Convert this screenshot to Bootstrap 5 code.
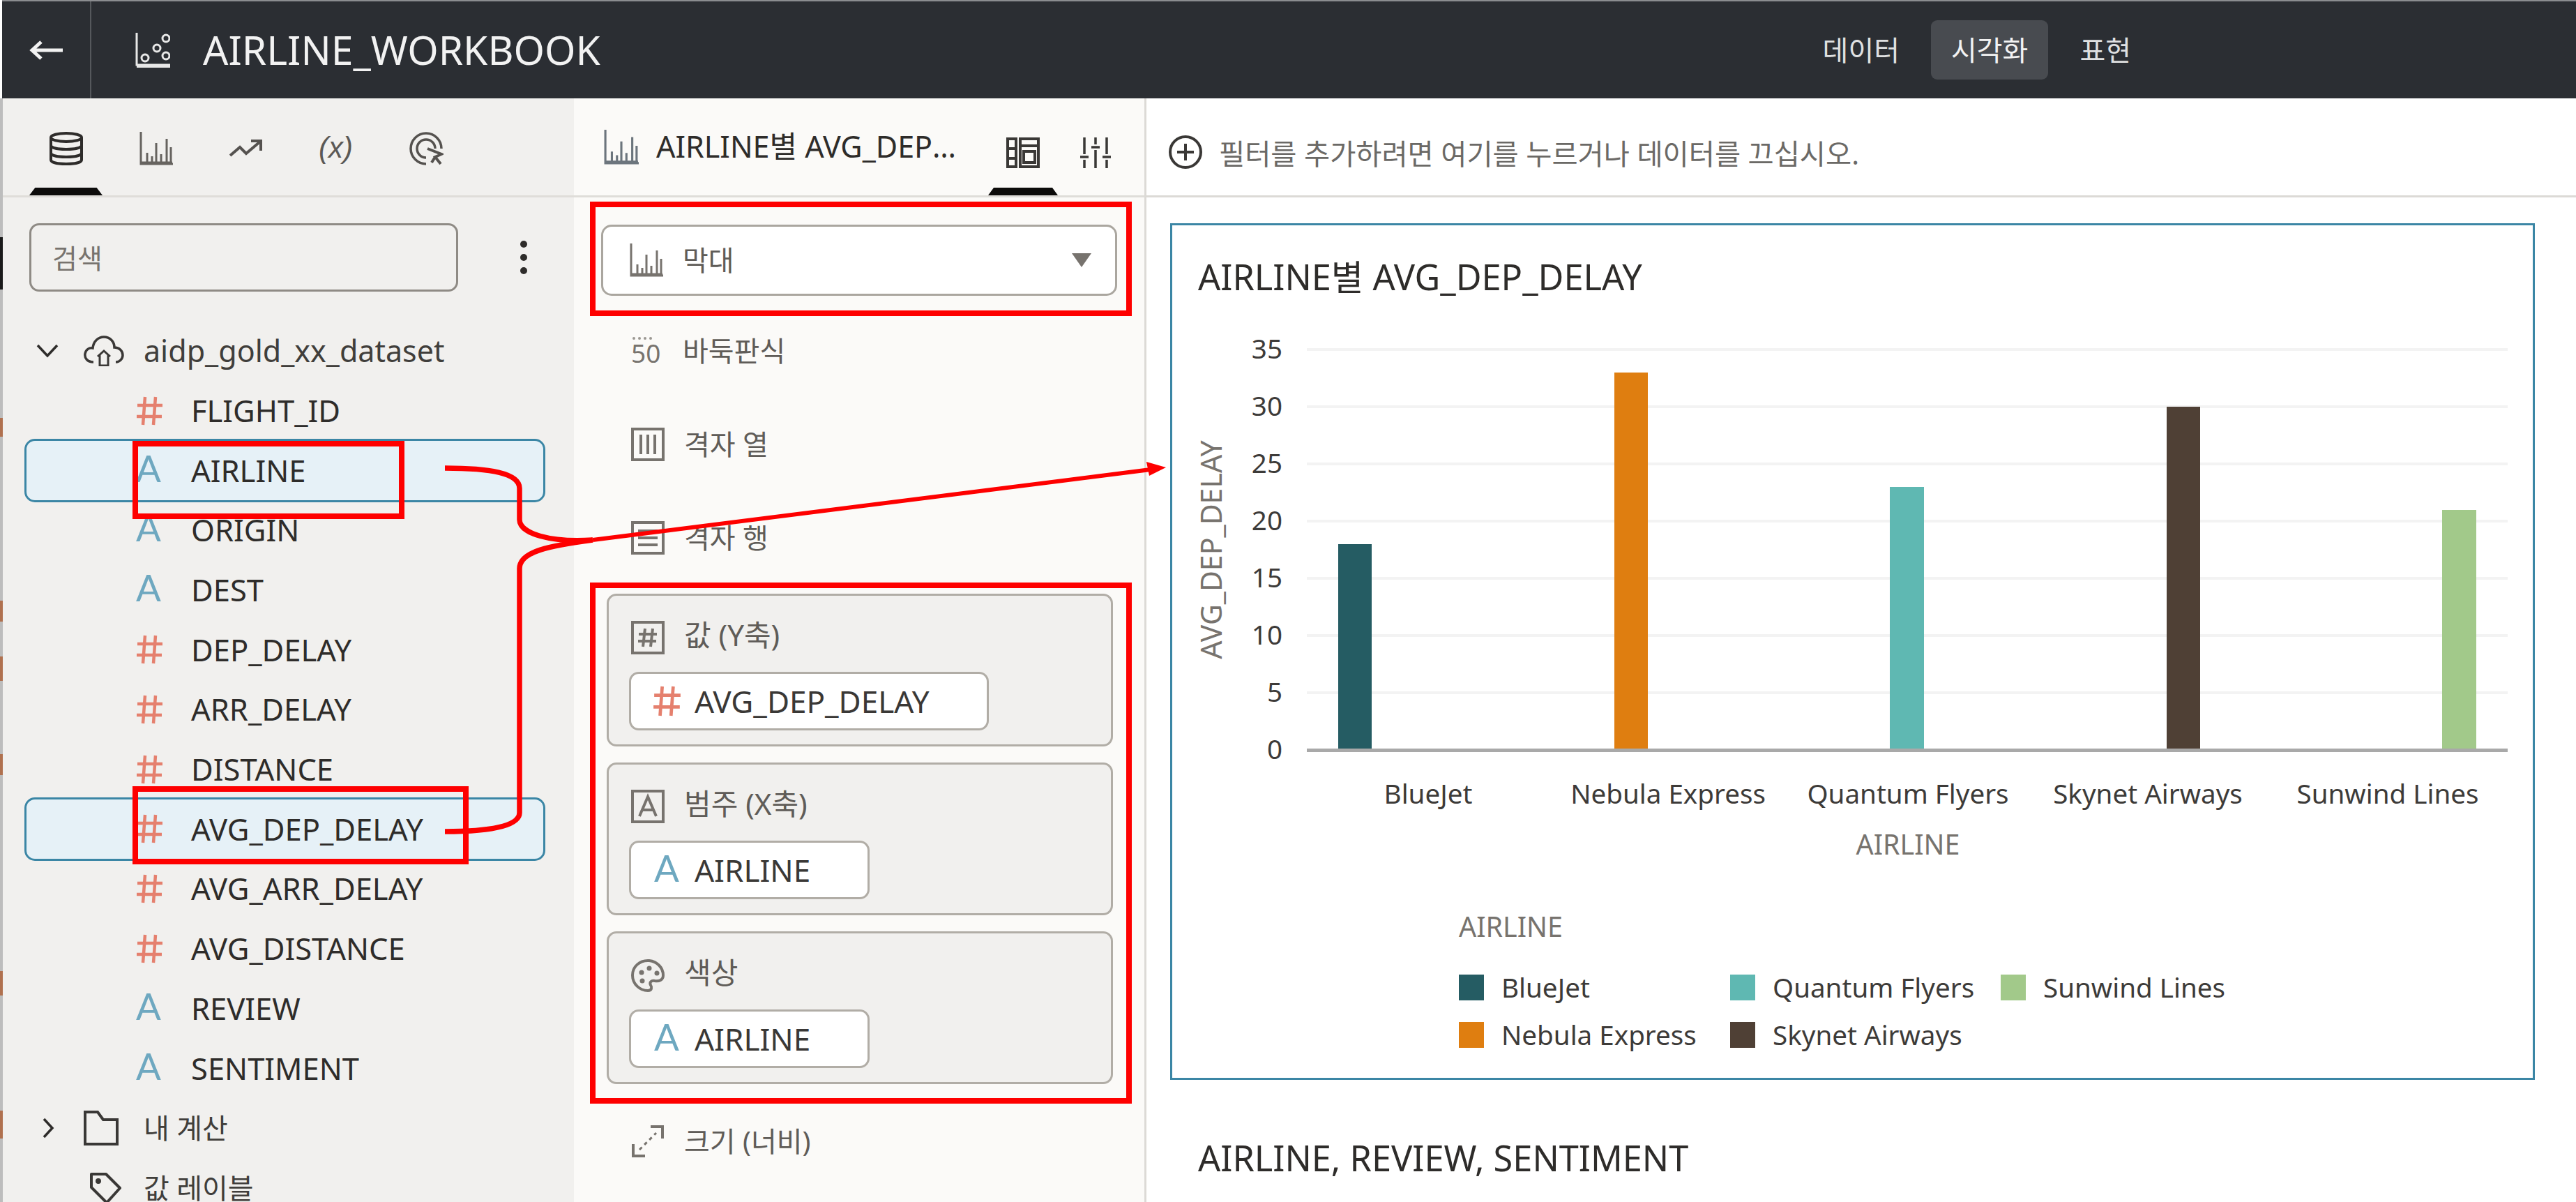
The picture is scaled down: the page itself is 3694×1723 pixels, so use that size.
<!DOCTYPE html>
<html lang="ko">
<head>
  <meta charset="UTF-8" />
  <title>AIRLINE_WORKBOOK</title>
  <link href="https://cdn.jsdelivr.net/npm/bootstrap@5.3.3/dist/css/bootstrap.min.css" rel="stylesheet"/>
  <style>
    body {
      width: 3694px;
      height: 1723px;
      overflow: hidden;
      background: #fff;
      color: #2e2c2a;
      font-family: "Noto Sans", "Noto Sans CJK KR", sans-serif;
      font-size: 43.5px;
    }
    svg { display: block; flex: none; }

    .top-bar { height: 141px; background: #2b2e33; color: #f2f2f2; border-top: 2px solid #8b8d90; margin-left: 3px; }
    .back-btn { width: 128px; height: 100%; border-right: 2px solid #55585c; }
    .wb-icon { margin: 0 47px 0 63px; }
    .wb-title { font-size: 57px; }
    .view-nav { margin-right: 609px; gap: 16px; }
    .view-nav .nav-link { color: #dfe0e1; font-size: 40px; line-height: 85px; padding: 0 29px; border-radius: 9px; }
    .view-nav .nav-link.active { background: #484b50; color: #f2f2f2; }

    .work-area { height: 1582px; }
    .data-side {
      width: 823px; background: #f1f0ee; border-left: 4px solid #bdbdbd;
      border-image: linear-gradient(#bdbdbd 0 200px, #1a1a1a 200px 275px, #bdbdbd 275px 458px, #b0714f 458px 485px, #bdbdbd 485px 720px,
        #b0714f 720px 750px, #bdbdbd 750px 800px, #b0714f 800px 835px, #bdbdbd 835px 940px, #b0714f 940px 970px, #bdbdbd 970px 1250px,
        #b0714f 1250px 1285px, #bdbdbd 1285px 1450px, #b0714f 1450px 1490px, #bdbdbd 1490px) 1;
    }
    .tab-row { height: 142px; border-bottom: 3px solid #dfddd9; padding-left: 38px; gap: 24px; color: #66635f; }
    .tab-row .nav-link { width: 105px; height: 139px; padding: 48px 0 0; color: inherit; position: relative; }
    .tab-row .nav-link svg { margin: 0 auto; }
    .tab-row .nav-link.active::after, .cfg-tabs .on::after {
      content: ""; position: absolute; left: 0; right: 0; bottom: 0; height: 11px;
      background: #0d0c0b; clip-path: polygon(8% 0, 92% 0, 100% 100%, 0 100%);
    }
    .fx-label { font-size: 42px; font-style: italic; line-height: 46px; text-align: center; color: #5b5956; font-family: "Liberation Sans", sans-serif; }
    .search-row { padding: 37px 0 0 38px; }
    .search-box.form-control {
      width: 615px; height: 98px; font-size: 39px; padding: 0 30px;
      background: #f1f0ee; border: 3px solid #8f8b85; border-radius: 14px; color: #333;
    }
    .search-box::placeholder { color: #77736e; }
    .kebab { margin-left: 88px; }
    .tree-list { margin-top: 42px; }
    .tree-row { height: 85.7px; background: transparent; border: 0; padding: 0; color: #2e2c2a; border-radius: 0; }
    .tree-row.picked {
      height: 91px; margin: -2.65px 41px -2.65px 31px;
      background: #e6f1f7; border: 3px solid #3b86a5; border-radius: 15px;
    }
    .leaf { padding-left: 191px; }
    .leaf.picked { padding-left: 157px; }
    .type-a { display: block; width: 44px; font-family: Lato, sans-serif; font-weight: 400; font-size: 53px; line-height: 1; color: #6ea8c0; margin-top: -8px; }
    .leaf-icon { width: 79px; flex: none; }
    .group-row { padding-left: 48px; }
    .group-row .chev { width: 68px; }
    .group-row .g-ico { width: 86px; }
    .kor-label { font-size: 40px; color: #403e3b; }
    .set-label { font-size: 43px; color: #403e3b; }

    .cfg-side { width: 821px; background: #fbfaf8; border-right: 3px solid #dcdad6; }
    .cfg-head { height: 142px; border-bottom: 3px solid #dfddd9; padding-left: 43px; }
    .cfg-title { width: 440px; margin: 0 36px 0 25px; font-size: 43px; white-space: nowrap; }
    .cfg-tabs .on { position: relative; width: 100px; height: 139px; padding-top: 56px; }
    .cfg-tabs .on svg { margin: 0 auto; }
    .kind-select {
      width: 740px; height: 102px; margin: 39px 0 0 39px; padding: 0 34px 0 38px;
      background: #fff; border: 3px solid #aaa69f; border-radius: 15px; color: #77736e;
    }
    .kor-name { font-size: 40px; color: #5f5c58; margin-left: 28px; }
    .cfg-row { height: 134px; padding-left: 82px; color: #77736e; }
    .first-row { margin-top: 12px; }
    .drop-card {
      width: 726px; height: 219px; margin: 0 0 23px 47px; padding: 36px 0 0 32px;
      background: #f1f0ee; border: 3px solid #b1ada6; border-radius: 14px; color: #77736e;
    }
    .top-card { margin-top: 13px; }
    .drop-head { height: 48px; }
    .drop-head .kor-name { font-size: 42px; margin-top: -10px; }
    .field-chip {
      display: inline-flex; align-items: center; height: 84px; margin: 25px 0 0 -3px;
      padding-right: 82px; background: #fff; border: 3px solid #b1ada6; border-radius: 14px;
      font-size: 44px; color: #3a3836;
    }
    .field-chip .chip-ico { width: 91px; padding-left: 30px; flex: none; }
    .field-chip .type-a { margin-left: 3px; }
    .last-row { height: 80px; margin-top: 42px; }

    .report-side { min-width: 0; }
    .filter-bar { height: 142px; border-bottom: 3px solid #dcdad6; padding: 14px 0 0 31px; font-size: 40.4px; color: #6b6966; }
    .filter-bar span { margin: 8px 0 0 23px; }
    .report-body { padding: 37px 59px 0 34px; }
    .chart-box { border: 3px solid #3b86a5; height: 1228px; background: #fff; }
    .chart-title { padding: 43px 0 0 37px; height: 105px; font-size: 50.5px; line-height: 62px; }
    .chart-box text { font-family: "Noto Sans", sans-serif; fill: #3d3b39; font-size: 38.6px; }
    .chart-box text.axis-name { fill: #77736e; font-size: 39.4px; }
    .chart-box text.y-name { fill: #77736e; font-size: 41px; }
    .next-title { margin: 81px 0 0 40px; font-size: 50.5px; line-height: 62px; }

    .notes { position: absolute; left: 0; top: 0; pointer-events: none; }
  </style>
</head>
<body class="m-0">
  <!-- shared icons -->
  <svg width="0" height="0" class="position-absolute">
    <symbol id="i-hash" viewBox="0 0 40 42"><path d="M13 1 10 41M28 1 25 41M2 13H38M1 29H37" fill="none" stroke="#e5806e" stroke-width="4.5"/></symbol>
    <symbol id="i-bars" viewBox="0 0 48 48"><path d="M2 0V46H48M1 44H47M11 46V30M18 46V35M24 46V16M31 46V32M39 46V10M45 46V22" fill="none" stroke="currentColor" stroke-width="3"/></symbol>
  </svg>

  <header class="top-bar d-flex align-items-center">
    <div class="back-btn d-flex align-items-center justify-content-center">
      <svg width="48" height="30" viewBox="0 0 48 30"><path d="M48 15H6M17 3 4 15 17 27" fill="none" stroke="#f2f2f2" stroke-width="5"/></svg>
    </div>
    <svg class="wb-icon" width="50" height="50" viewBox="0 0 50 50" fill="none" stroke="#e8e8e8" stroke-width="3"><path d="M2 0V46H50M2 49H50"/><circle cx="14" cy="36" r="5"/><circle cx="31" cy="22" r="5"/><circle cx="44" cy="8" r="5"/><circle cx="44" cy="33" r="5"/></svg>
    <div class="wb-title">AIRLINE_WORKBOOK</div>
    <ul class="nav view-nav ms-auto">
      <li class="nav-item"><a class="nav-link" href="#">데이터</a></li>
      <li class="nav-item"><a class="nav-link active" href="#">시각화</a></li>
      <li class="nav-item"><a class="nav-link" href="#">표현</a></li>
    </ul>
  </header>

  <div class="work-area d-flex">
    <!-- data panel -->
    <aside class="data-side flex-none">
      <ul class="nav tab-row">
        <li class="nav-item"><a class="nav-link active" href="#">
          <svg width="50" height="48" viewBox="0 0 50 48" fill="none" stroke="#2e2c2a" stroke-width="4"><ellipse cx="25" cy="8" rx="22" ry="6"/><path d="M3 8V40C3 44 13 46 25 46S47 44 47 40V8M3 19C3 23 13 25 25 25S47 23 47 19M3 30C3 34 13 36 25 36S47 34 47 30"/></svg>
        </a></li>
        <li class="nav-item"><a class="nav-link" href="#"><svg width="50" height="48"><use href="#i-bars"/></svg></a></li>
        <li class="nav-item"><a class="nav-link" href="#">
          <svg width="48" height="48" viewBox="0 0 48 48" fill="none" stroke="#55524f" stroke-width="4"><path d="M1 34 15 22 24 31 44 14M31 13H45V27"/></svg>
        </a></li>
        <li class="nav-item"><a class="nav-link" href="#"><div class="fx-label">(x)</div></a></li>
        <li class="nav-item"><a class="nav-link" href="#">
          <svg width="50" height="48" viewBox="0 0 50 48" fill="none" stroke="#55524f" stroke-width="3.5"><path d="M25 46A22 22 0 1 1 47 24M25 37A13 13 0 1 1 38 24"/><path d="M27 24 47 32 38 36 46 46M38 36 33 44Z" stroke-width="4"/></svg>
        </a></li>
      </ul>

      <div class="search-row d-flex align-items-center">
        <input type="text" class="form-control search-box" placeholder="검색" />
        <svg class="kebab" width="12" height="50" viewBox="0 0 12 50" fill="#2e2c2a"><circle cx="6" cy="6" r="5"/><circle cx="6" cy="25" r="5"/><circle cx="6" cy="44" r="5"/></svg>
      </div>

      <div class="list-group tree-list">
        <div class="list-group-item tree-row group-row d-flex align-items-center">
          <span class="chev"><svg width="32" height="20" viewBox="0 0 32 20"><path d="M2 2 16 17 30 2" fill="none" stroke="#2e2c2a" stroke-width="3.5"/></svg></span>
          <span class="g-ico"><svg width="58" height="44" viewBox="0 0 58 44" fill="none" stroke="#3a3836" stroke-width="3.5"><path d="M14 38C5 38 1 32 2 26 3 20 8 17 13 18 14 8 21 2 29 2 38 2 44 9 44 17 51 17 56 22 56 28 56 33 52 38 46 38"/><path d="M20 30 29 22 38 30M23 28V43H35V28" stroke-width="3"/></svg></span>
          <span class="set-label">aidp_gold_xx_dataset</span>
        </div>
        <div class="list-group-item tree-row leaf d-flex align-items-center"><span class="leaf-icon"><svg width="40" height="42"><use href="#i-hash"/></svg></span>FLIGHT_ID</div>
        <div class="list-group-item tree-row leaf picked d-flex align-items-center"><span class="leaf-icon"><span class="type-a">A</span></span>AIRLINE</div>
        <div class="list-group-item tree-row leaf d-flex align-items-center"><span class="leaf-icon"><span class="type-a">A</span></span>ORIGIN</div>
        <div class="list-group-item tree-row leaf d-flex align-items-center"><span class="leaf-icon"><span class="type-a">A</span></span>DEST</div>
        <div class="list-group-item tree-row leaf d-flex align-items-center"><span class="leaf-icon"><svg width="40" height="42"><use href="#i-hash"/></svg></span>DEP_DELAY</div>
        <div class="list-group-item tree-row leaf d-flex align-items-center"><span class="leaf-icon"><svg width="40" height="42"><use href="#i-hash"/></svg></span>ARR_DELAY</div>
        <div class="list-group-item tree-row leaf d-flex align-items-center"><span class="leaf-icon"><svg width="40" height="42"><use href="#i-hash"/></svg></span>DISTANCE</div>
        <div class="list-group-item tree-row leaf picked d-flex align-items-center"><span class="leaf-icon"><svg width="40" height="42"><use href="#i-hash"/></svg></span>AVG_DEP_DELAY</div>
        <div class="list-group-item tree-row leaf d-flex align-items-center"><span class="leaf-icon"><svg width="40" height="42"><use href="#i-hash"/></svg></span>AVG_ARR_DELAY</div>
        <div class="list-group-item tree-row leaf d-flex align-items-center"><span class="leaf-icon"><svg width="40" height="42"><use href="#i-hash"/></svg></span>AVG_DISTANCE</div>
        <div class="list-group-item tree-row leaf d-flex align-items-center"><span class="leaf-icon"><span class="type-a">A</span></span>REVIEW</div>
        <div class="list-group-item tree-row leaf d-flex align-items-center"><span class="leaf-icon"><span class="type-a">A</span></span>SENTIMENT</div>
        <div class="list-group-item tree-row group-row d-flex align-items-center">
          <span class="chev"><svg width="18" height="30" viewBox="0 0 18 30" class="ms-2"><path d="M3 2 15 15 3 28" fill="none" stroke="#2e2c2a" stroke-width="3.5"/></svg></span>
          <span class="g-ico"><svg width="50" height="50" viewBox="0 0 50 50" fill="none" stroke="#3a3836" stroke-width="4"><path d="M2 48V2H20L28 13H48V48Z"/></svg></span>
          <span class="kor-label">내 계산</span>
        </div>
        <div class="list-group-item tree-row group-row d-flex align-items-center">
          <span class="chev"></span>
          <span class="g-ico"><svg width="46" height="46" viewBox="0 0 46 46" fill="none" stroke="#3a3836" stroke-width="4" class="ms-2"><path d="M3 3H24L44 23 25 44 3 22Z" stroke-linejoin="round"/><circle cx="13" cy="13" r="2"/></svg></span>
          <span class="kor-label">값 레이블</span>
        </div>
      </div>
    </aside>

    <!-- visualization config -->
    <section class="cfg-side flex-none">
      <div class="cfg-head d-flex align-items-center">
        <svg width="50" height="50" class="text-secondary"><use href="#i-bars"/></svg>
        <div class="cfg-title text-truncate">AIRLINE별 AVG_DEP_DELAY</div>
        <div class="cfg-tabs d-flex align-items-start">
          <div class="on">
            <svg width="48" height="44" viewBox="0 0 48 44" fill="none" stroke="#3a3836" stroke-width="4"><rect x="2" y="2" width="12" height="40"/><rect x="20" y="2" width="26" height="40"/><path d="M2 16H14M2 30H14M20 12H46"/><rect x="25" y="20" width="16" height="16"/></svg>
          </div>
          <svg width="44" height="44" viewBox="0 0 44 44" fill="none" stroke="#3a3836" stroke-width="3.5" style="margin:56px 0 0 32px"><path d="M6 0V24M6 32V44M22 0V10M22 18V44M38 0V24M38 32V44M0 28H12M16 14H28M32 28H44"/></svg>
        </div>
      </div>

      <div class="kind-select d-flex align-items-center">
        <svg width="48" height="48"><use href="#i-bars"/></svg>
        <span class="kor-name">막대</span>
        <svg class="ms-auto" width="28" height="20" viewBox="0 0 28 20"><path d="M0 0H28L14 20Z" fill="#77736e"/></svg>
      </div>

      <div class="cfg-row first-row d-flex align-items-center">
        <svg width="54" height="60" viewBox="0 0 54 60"><g fill="#9a9792"><circle cx="4" cy="12" r="2"/><circle cx="12" cy="12" r="2"/><circle cx="20" cy="12" r="2"/><circle cx="28" cy="12" r="2"/></g><text x="0" y="47" font-size="37" fill="#77736e" font-family="Noto Sans">50</text></svg>
        <span class="kor-name" style="margin-left:20px">바둑판식</span>
      </div>
      <div class="cfg-row d-flex align-items-center">
        <svg width="48" height="48" viewBox="0 0 48 48" fill="none" stroke="#77736e" stroke-width="4"><rect x="2" y="2" width="44" height="44"/><path d="M14 10V38M24 10V38M34 10V38"/></svg>
        <span class="kor-name">격자 열</span>
      </div>
      <div class="cfg-row d-flex align-items-center">
        <svg width="48" height="48" viewBox="0 0 48 48" fill="none" stroke="#77736e" stroke-width="4"><rect x="2" y="2" width="44" height="44"/><path d="M10 14H38M10 24H38M10 34H38"/></svg>
        <span class="kor-name">격자 행</span>
      </div>

      <div class="drop-card top-card">
        <div class="drop-head d-flex align-items-center">
          <svg width="48" height="48" viewBox="0 0 48 48" fill="none" stroke="#77736e" stroke-width="4"><rect x="2" y="2" width="44" height="44"/><path d="M20 11 17 37M31 11 28 37M11 19H37M10 29H36"/></svg>
          <span class="kor-name">값 (Y축)</span>
        </div>
        <div class="field-chip"><span class="chip-ico"><svg width="44" height="44"><use href="#i-hash"/></svg></span>AVG_DEP_DELAY</div>
      </div>
      <div class="drop-card">
        <div class="drop-head d-flex align-items-center">
          <svg width="48" height="48" viewBox="0 0 48 48" fill="none" stroke="#77736e" stroke-width="4"><rect x="2" y="2" width="44" height="44"/><path d="M12 38 24 10 36 38M16 29H32"/></svg>
          <span class="kor-name">범주 (X축)</span>
        </div>
        <div class="field-chip"><span class="chip-ico"><span class="type-a">A</span></span>AIRLINE</div>
      </div>
      <div class="drop-card">
        <div class="drop-head d-flex align-items-center">
          <svg width="48" height="48" viewBox="0 0 48 48" fill="none" stroke="#77736e" stroke-width="4"><path d="M26 3C12 2 2 12 2 24 2 37 13 46 24 46 30 46 30 41 28 38 26 34 29 31 34 32 40 33 46 31 46 24 46 13 37 4 26 3Z"/><g fill="#77736e" stroke="none"><circle cx="15" cy="20" r="3.5"/><circle cx="26" cy="14" r="3.5"/><circle cx="37" cy="21" r="3.5"/><circle cx="16" cy="32" r="3.5"/></g></svg>
          <span class="kor-name">색상</span>
        </div>
        <div class="field-chip"><span class="chip-ico"><span class="type-a">A</span></span>AIRLINE</div>
      </div>

      <div class="cfg-row last-row d-flex align-items-center">
        <svg width="48" height="48" viewBox="0 0 48 48" fill="none" stroke="#77736e" stroke-width="4"><path d="M28 3H45V20M3 28V45H20" /><path d="M12 36 36 12" stroke-dasharray="5 5" stroke-width="3"/></svg>
        <span class="kor-name">크기 (너비)</span>
      </div>
    </section>

    <!-- canvas -->
    <main class="report-side flex-grow-1">
      <div class="filter-bar d-flex align-items-center">
        <svg width="50" height="50" viewBox="0 0 50 50" fill="none" stroke="#3a3836" stroke-width="4"><circle cx="25" cy="25" r="22"/><path d="M25 13V37M13 25H37"/></svg>
        <span>필터를 추가하려면 여기를 누르거나 데이터를 끄십시오.</span>
      </div>
      <div class="report-body">
        <div class="chart-box">
          <div class="chart-title">AIRLINE별 AVG_DEP_DELAY</div>
          <svg width="1950" height="1117" viewBox="1681 430 1950 1117">
            <g fill="#f3f3f3">
              <rect x="1874" y="501" width="1722" height="4"/><rect x="1874" y="583" width="1722" height="4"/>
              <rect x="1874" y="665" width="1722" height="4"/><rect x="1874" y="747" width="1722" height="4"/>
              <rect x="1874" y="829" width="1722" height="4"/><rect x="1874" y="911" width="1722" height="4"/>
              <rect x="1874" y="993" width="1722" height="4"/>
            </g>
            <rect x="1919" y="782" width="48" height="295" fill="#255c63"/>
            <rect x="2315" y="536" width="48" height="541" fill="#df7e10"/>
            <rect x="2710" y="700" width="49" height="377" fill="#5fb8b2"/>
            <rect x="3107" y="585" width="48" height="492" fill="#4f4035"/>
            <rect x="3502" y="733" width="49" height="344" fill="#a2c98a"/>
            <rect x="1874" y="1075" width="1722" height="5" fill="#a9a9a9"/>
            <g text-anchor="end">
              <text x="1839" y="516">35</text><text x="1839" y="598">30</text><text x="1839" y="680">25</text><text x="1839" y="762">20</text>
              <text x="1839" y="844">15</text><text x="1839" y="926">10</text><text x="1839" y="1008">5</text><text x="1839" y="1090">0</text>
            </g>
            <text class="y-name" x="1752" y="790" text-anchor="middle" transform="rotate(-90 1752 790)">AVG_DEP_DELAY</text>
            <g text-anchor="middle">
              <text x="2048" y="1154">BlueJet</text><text x="2392" y="1154">Nebula Express</text><text x="2736" y="1154">Quantum Flyers</text>
              <text x="3080" y="1154">Skynet Airways</text><text x="3424" y="1154">Sunwind Lines</text>
              <text class="axis-name" x="2736" y="1227">AIRLINE</text>
            </g>
            <text class="axis-name" x="2092" y="1345">AIRLINE</text>
            <rect x="2092" y="1399" width="36" height="37" fill="#255c63"/><text x="2153" y="1432">BlueJet</text>
            <rect x="2481" y="1399" width="36" height="37" fill="#5fb8b2"/><text x="2542" y="1432">Quantum Flyers</text>
            <rect x="2869" y="1399" width="36" height="37" fill="#a2c98a"/><text x="2930" y="1432">Sunwind Lines</text>
            <rect x="2092" y="1467" width="36" height="37" fill="#df7e10"/><text x="2153" y="1500">Nebula Express</text>
            <rect x="2481" y="1467" width="36" height="37" fill="#4f4035"/><text x="2542" y="1500">Skynet Airways</text>
          </svg>
        </div>
        <div class="next-title">AIRLINE, REVIEW, SENTIMENT</div>
      </div>
    </main>
  </div>

  <!-- red call-outs drawn on top of the screenshot -->
  <svg class="notes" width="3694" height="1723" viewBox="0 0 3694 1723" fill="none" stroke="#fe0000">
    <g stroke-width="8">
      <rect x="194" y="636" width="382" height="104"/>
      <rect x="194" y="1131" width="474" height="104"/>
      <rect x="850" y="293" width="769" height="156"/>
      <rect x="850" y="839" width="769" height="739"/>
    </g>
    <path d="M638 671C700 671 745 678 745 700V745C745 765 790 778 850 774M638 1192C700 1192 745 1185 745 1165V815C745 790 790 782 850 774" stroke-width="7.5"/>
    <path d="M850 774 1650 673" stroke-width="6"/>
    <path d="M1672 670 1644 662 1648 682Z" fill="#fe0000" stroke="none"/>
  </svg>

  <script src="https://cdn.jsdelivr.net/npm/bootstrap@5.3.3/dist/js/bootstrap.bundle.min.js"></script>
</body>
</html>
